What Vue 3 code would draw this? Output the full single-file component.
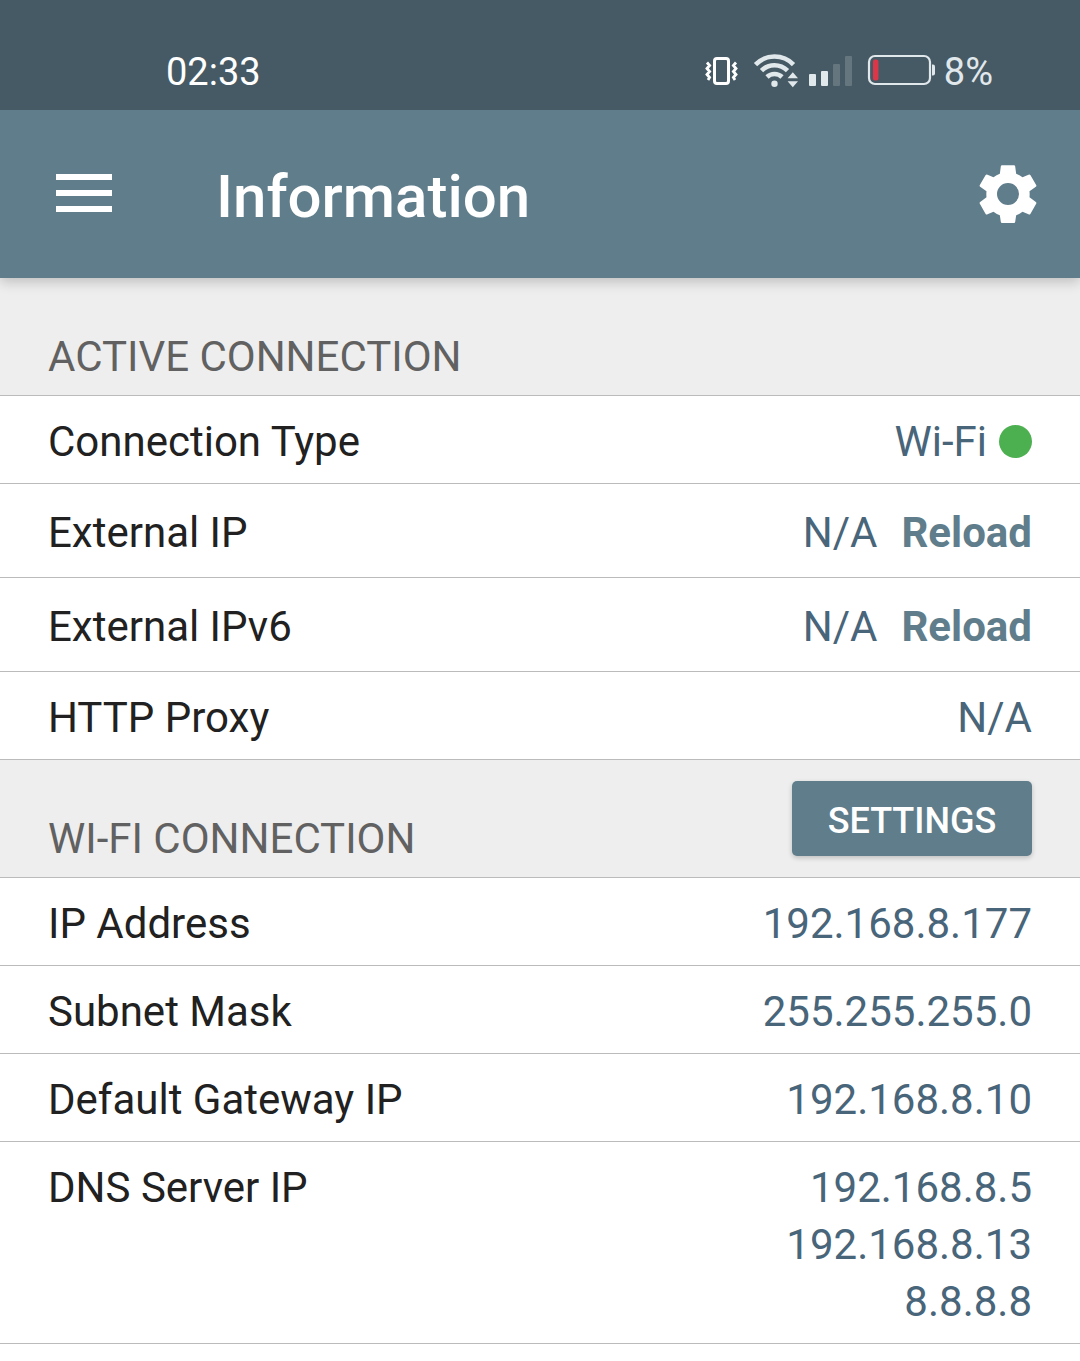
<script setup>
const sections = [
  {
    title: 'ACTIVE CONNECTION',
    rows: [
      { label: 'Connection Type', values: ['Wi-Fi'], online: true },
      { label: 'External IP', values: ['N/A'], reload: true },
      { label: 'External IPv6', values: ['N/A'], reload: true },
      { label: 'HTTP Proxy', values: ['N/A'] },
    ],
  },
  {
    title: 'WI-FI CONNECTION',
    action: 'SETTINGS',
    rows: [
      { label: 'IP Address', values: ['192.168.8.177'] },
      { label: 'Subnet Mask', values: ['255.255.255.0'] },
      { label: 'Default Gateway IP', values: ['192.168.8.10'] },
      { label: 'DNS Server IP', values: ['192.168.8.5', '192.168.8.13', '8.8.8.8'] },
    ],
  },
]
</script>

<template>
  <div class="screen">
    <div class="status">
      <span class="status-text">02:33</span>
      <div class="indicators">
        <!-- vibrate -->
        <svg width="38" height="40" viewBox="704 50 38 40" fill="none" stroke="#fff">
          <rect x="714.5" y="58.5" width="14" height="25" rx="2.5" stroke-width="3" />
          <path d="M707 62.5l2.6 3-2.6 3 2.6 3-2.6 3 2.6 3-1.6 2.5M736 62.5l-2.6 3 2.6 3-2.6 3 2.6 3-2.6 3 1.6 2.5" stroke-width="2.8" />
        </svg>
        <!-- wifi -->
        <svg width="50" height="40" viewBox="750 50 50 40" fill="none" stroke="#e1e8ec" stroke-width="4.6">
          <path d="M755.5 64.6a26.5 26.5 0 0 1 38 0M761.5 70.6a18.4 18.4 0 0 1 26 0M767 77a10.8 10.8 0 0 1 15 0" />
          <circle cx="774.5" cy="83.7" r="3.2" fill="#e1e8ec" stroke="none" />
          <path d="M787.6 78.2l5.2-6 5.2 6zM787.6 81.2h10.4l-5.2 6z" fill="#e1e8ec" stroke="none" />
        </svg>
        <!-- mobile signal -->
        <svg width="44" height="40" viewBox="808 50 44 40" fill="#e1e8ec">
          <rect x="809" y="74" width="7" height="12" rx="1" />
          <rect x="821" y="71" width="7" height="15" rx="1" />
          <rect x="833" y="64" width="7" height="22" rx="1" fill="#65767f" />
          <rect x="845" y="56" width="7" height="30" rx="1" fill="#65767f" />
        </svg>
        <!-- battery -->
        <svg width="76" height="40" viewBox="860 50 76 40">
          <rect x="869" y="56" width="61" height="28" rx="6" fill="none" stroke="#e1e8ec" stroke-width="2.2" />
          <rect x="873" y="59.5" width="5.4" height="21" rx="2" fill="#dc3748" />
          <path d="M932 64.5h1a2 2 0 0 1 2 2v7a2 2 0 0 1-2 2h-1z" fill="#e1e8ec" />
        </svg>
        <span class="status-text level">8%</span>
      </div>
    </div>

    <header class="bar">
      <button class="icon-button" type="button" aria-label="Menu">
        <svg width="56" height="40" viewBox="0 0 56 40" fill="#fff">
          <path d="M0 0h56v6H0zM0 16h56v6H0zM0 32h56v6H0z" />
        </svg>
      </button>
      <h1>Information</h1>
      <button class="icon-button" type="button" aria-label="Preferences">
        <svg width="60" height="60" viewBox="54 41 180 180" fill="#fff">
          <path fill-rule="evenodd" d="M126 45h36q3 0 3.500 3l3 22q10 4 19 11l18-8q4-2 6 2l17 29q2 3-1 5l-19 14q1 9 0 18l19 14q3 2 1 5l-17 30q-2 4-6 2l-18-8q-9 7-19 11l-3 20q-.5 3-3.500 3h-36q-3 0-3.500-3l-3-20q-10-4-19-11l-18 8q-4 2-6-2l-17-30q-2-3 1-5l19-14q-1-9 0-18l-19-14q-3-2-1-5l17-29q2-4 6-2l18 8q9-7 19-11l3-22q.5-3 3.500-3zM144 98a33 33 0 1 0 0 66 33 33 0 1 0 0-66z" />
        </svg>
      </button>
    </header>

    <main>
      <section v-for="section in sections" :key="section.title">
        <div class="heading">
          <h2>{{ section.title }}</h2>
          <button v-if="section.action" class="action" type="button">{{ section.action }}</button>
        </div>
        <dl>
          <div v-for="row in section.rows" :key="row.label" class="row" :class="{ tall: row.reload }">
            <dt>{{ row.label }}</dt>
            <dd>
              <div class="values">
                <span v-for="value in row.values" :key="value">{{ value }}</span>
              </div>
              <span v-if="row.online" class="dot"></span>
              <button v-if="row.reload" class="reload" type="button">Reload</button>
            </dd>
          </div>
        </dl>
      </section>
    </main>
  </div>
</template>

<style>
body {
  margin: 0;
  background: #fff;
}
</style>

<style scoped>
.screen {
  font-family: Roboto, "Liberation Sans", sans-serif;
  font-size: 42px;
  line-height: 57px;
  color: #212121;
}

button {
  margin: 0;
  padding: 0;
  border: 0;
  background: none;
  font: inherit;
  cursor: pointer;
}

svg {
  display: block;
}

.status {
  position: relative;
  z-index: 1;
  display: flex;
  align-items: center;
  justify-content: space-between;
  box-sizing: border-box;
  height: 110px;
  padding: 30px 87px 0 166px;
  background: #465a65;
  color: #fff;
  font-size: 38px;
  line-height: 40px;
}

.status-text {
  padding-top: 3px;
}

.indicators {
  display: flex;
  align-items: center;
  gap: 8px;
}

.level {
  color: #e1e8ec;
}

.bar {
  position: relative;
  display: flex;
  align-items: center;
  height: 168px;
  padding: 0 42px 0 56px;
  background: #607d8b;
  color: #fff;
  box-shadow: 0 4px 12px rgba(0, 0, 0, 0.2);
}

h1 {
  flex: 1;
  margin: 6px 0 0 104px;
  font-size: 60px;
  font-weight: 500;
  line-height: 72px;
}

.heading {
  display: flex;
  align-items: center;
  justify-content: space-between;
  padding: 0 48px;
  border-bottom: 1px solid #bbb;
  background: #eee;
}

h2 {
  margin: 0;
  padding: 50px 0 10px;
  color: #616161;
  font-size: 42px;
  font-weight: 400;
}

.action {
  width: 240px;
  height: 75px;
  padding-top: 6px;
  border-radius: 5px;
  background: #607d8b;
  box-shadow: 0 2px 5px rgba(0, 0, 0, 0.2);
  color: #fff;
  font-size: 36px;
  font-weight: 500;
}

dl {
  margin: 0;
}

.row {
  display: flex;
  justify-content: space-between;
  padding: 17px 48px 13px;
  border-bottom: 1px solid #bbb;
  background: #fff;
}

.row.tall {
  padding: 20px 48px 16px;
}

dd {
  display: flex;
  margin: 0;
  color: #48657a;
}

.values {
  display: flex;
  flex-direction: column;
  align-items: flex-end;
}

.dot {
  width: 33px;
  height: 33px;
  margin: 12px 0 0 12px;
  border-radius: 50%;
  background: #4caf50;
}

.reload {
  margin-left: 24px;
  color: #607d8b;
  font-weight: 700;
}
</style>
